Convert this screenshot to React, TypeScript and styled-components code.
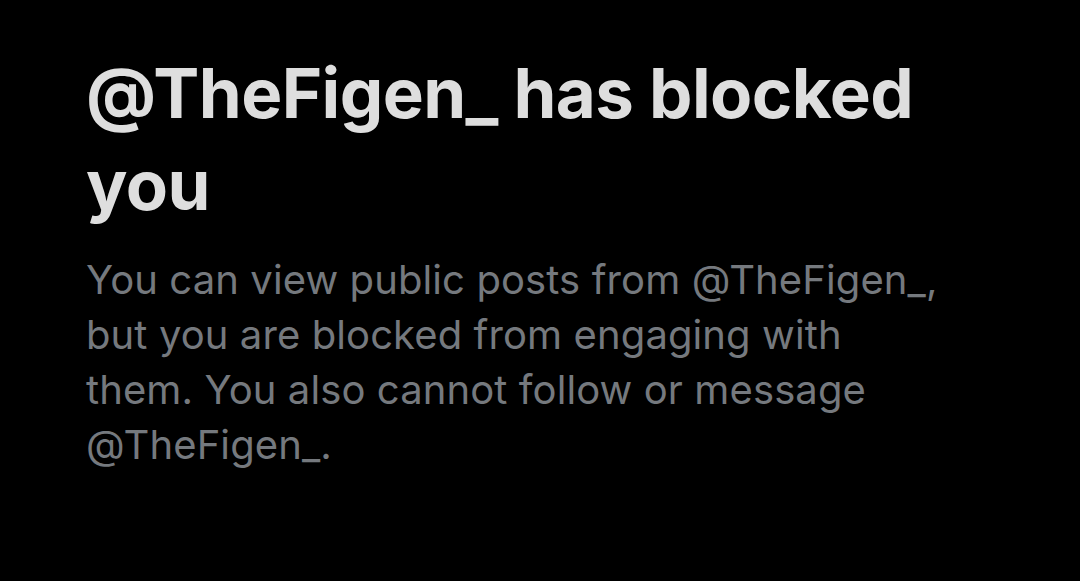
import React from "react";
import styled, { createGlobalStyle } from "styled-components";

const Global = createGlobalStyle`
  html, body { margin: 0; padding: 0; background: #000; }
  body { width: 1080px; height: 581px; overflow: hidden; }
`;

const Page = styled.main`
  box-sizing: border-box;
  width: 1080px;
  height: 581px;
  background: #000;
  padding: 47px 130px 0 86px;
  display: flex;
  flex-direction: column;
  gap: 21px;
  font-family: Inter, "Noto Sans", sans-serif;
`;

const Title = styled.h1`
  margin: 0;
  color: #dedede;
  font-size: 69px;
  font-weight: 700;
  line-height: 92px;
  letter-spacing: -0.6px;
`;

const Body = styled.p`
  margin: 0;
  color: #75797e;
  font-size: 40px;
  font-weight: 400;
  line-height: 55px;
  letter-spacing: 0.1px;
`;

export default function App() {
  return (
    <>
      <Global />
      <Page>
        <Title>@TheFigen_ has blocked you</Title>
        <Body>
          You can view public posts from @TheFigen_, but you are blocked from engaging with them. You also cannot follow or message @TheFigen_.
        </Body>
      </Page>
    </>
  );
}
